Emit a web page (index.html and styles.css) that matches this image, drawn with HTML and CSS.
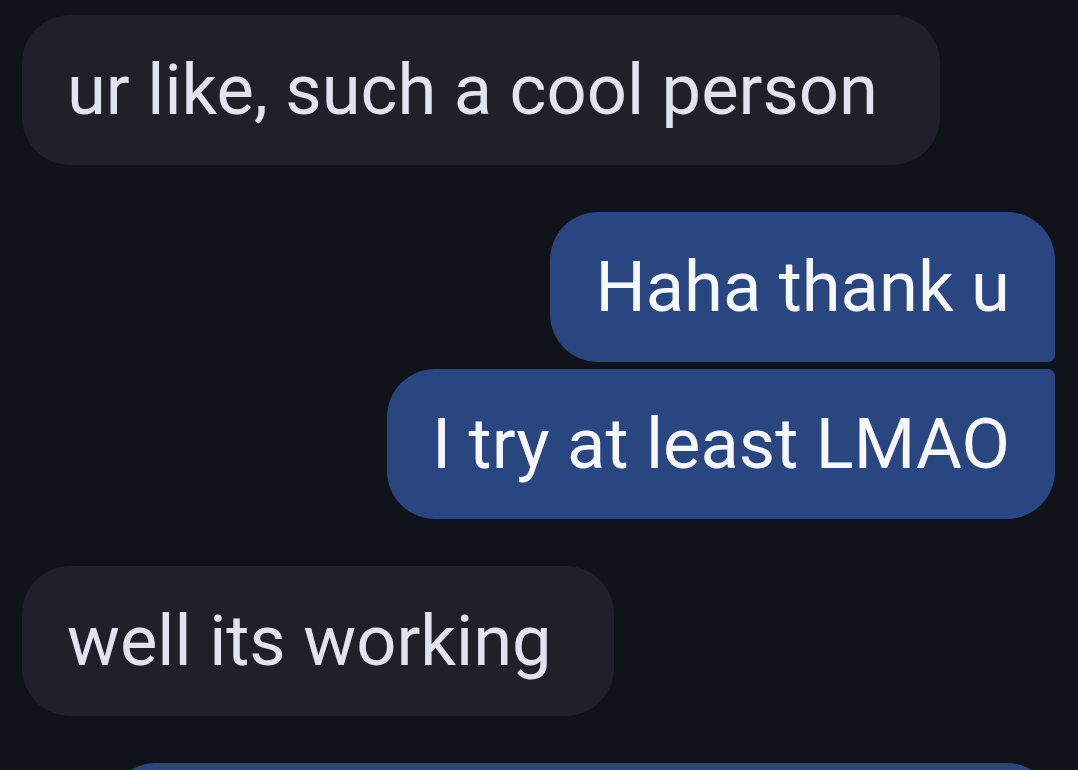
FILE: index.html
```html
<!DOCTYPE html>
<html lang="en">
<head>
<meta charset="utf-8">
<title>Chat</title>
<link rel="stylesheet" href="styles.css">
</head>
<body>
<main class="thread">
  <div class="group received">
    <div class="bubble">ur like, such a cool person</div>
  </div>
  <div class="group sent">
    <div class="bubble first">Haha thank u</div>
    <div class="bubble last">I try at least LMAO</div>
  </div>
  <div class="group received">
    <div class="bubble">well its working</div>
  </div>
  <div class="group sent">
    <div class="bubble">Thats good to hear honestly lol</div>
  </div>
</main>
</body>
</html>
```
FILE: styles.css
```css
* { box-sizing: border-box; }
html, body {
  margin: 0;
  padding: 0;
  background: #11131b;
  height: 100%;
  overflow: hidden;
}
.thread {
  display: flex;
  flex-direction: column;
  gap: 47px;
  padding: 15px 23px 0 22px;
  font-family: Roboto, "Noto Sans", sans-serif;
  font-size: 70.5px;
  line-height: 82px;
}
.group {
  display: flex;
  flex-direction: column;
  gap: 7px;
}
.received { align-items: flex-start; }
.sent { align-items: flex-end; }
.bubble {
  padding: 34px 45px;
  border-radius: 48px;
  max-width: 947px;
}
.received .bubble {
  background: #1f2029;
  color: #e2e3f1;
  padding-right: 62px;
}
.sent .bubble {
  background: #2a4680;
  color: #f7f7ff;
}
.sent .bubble.first { border-bottom-right-radius: 7px; }
.sent .bubble.last { border-top-right-radius: 7px; }
```
